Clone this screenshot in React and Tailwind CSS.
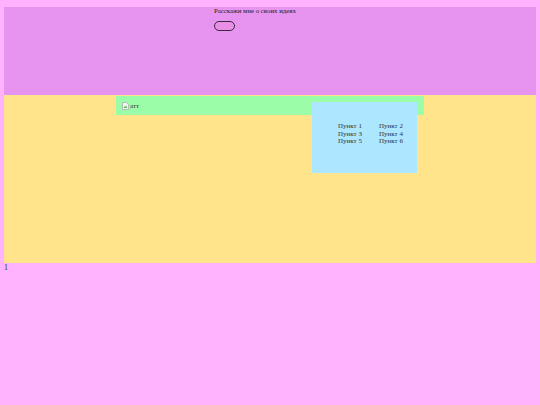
import React from 'react';

const ITEMS = ['Пункт 1', 'Пункт 2', 'Пункт 3', 'Пункт 4', 'Пункт 5', 'Пункт 6'];

const BrokenImage = () => (
  <svg width="7" height="8" viewBox="0 0 7 8" className="mr-[1px]">
    <path d="M0.5 0.5h4l2 2v5h-6z" fill="#f2f2f2" stroke="#a0a0a0" strokeWidth="0.6" />
    <path d="M1.5 6l1.5-2 1 1 1-1.5v2.5h-3.5z" fill="#6bb36b" />
  </svg>
);

export default function App() {
  return (
    <div
      className="min-h-[405px] bg-[#ffb3ff] pt-[7px] px-[4px] text-black"
      style={{ fontFamily: '"Liberation Serif", "DejaVu Serif", serif' }}
    >
      {/* шапка */}
      <header className="h-[88px] bg-[#e794f0] pl-[210px]">
        <p className="text-[6.8px] leading-[8px] text-[#222]">Расскажи мне о своих идеях</p>
        <button className="mt-[6px] block w-[21px] h-[10px] rounded-full border border-[#3a2a3a] bg-[#ea8ee8]" />
      </header>

      {/* основной блок */}
      <main className="relative h-[168px] bg-[#ffe48c]">
        <div className="ml-[112px] pt-[1px]">
          <div className="flex items-center w-[308px] h-[19px] bg-[#9cfda8] pl-[6px] pt-[1px]">
            <BrokenImage />
            <span className="text-[7px] leading-none text-[#333]">атт</span>
          </div>
        </div>
        <div className="absolute left-[308px] top-[7px] w-[105px] h-[71px] bg-[#ade6ff] pl-[26px] pt-[21px]">
          <div className="grid grid-cols-[41px_41px] text-[7px] leading-[7.6px] text-[#333]">
            {ITEMS.map((item) => (
              <span key={item}>{item}</span>
            ))}
          </div>
        </div>
      </main>

      <p className="text-[8px] leading-[10px] text-[#333]">1</p>
    </div>
  );
}
